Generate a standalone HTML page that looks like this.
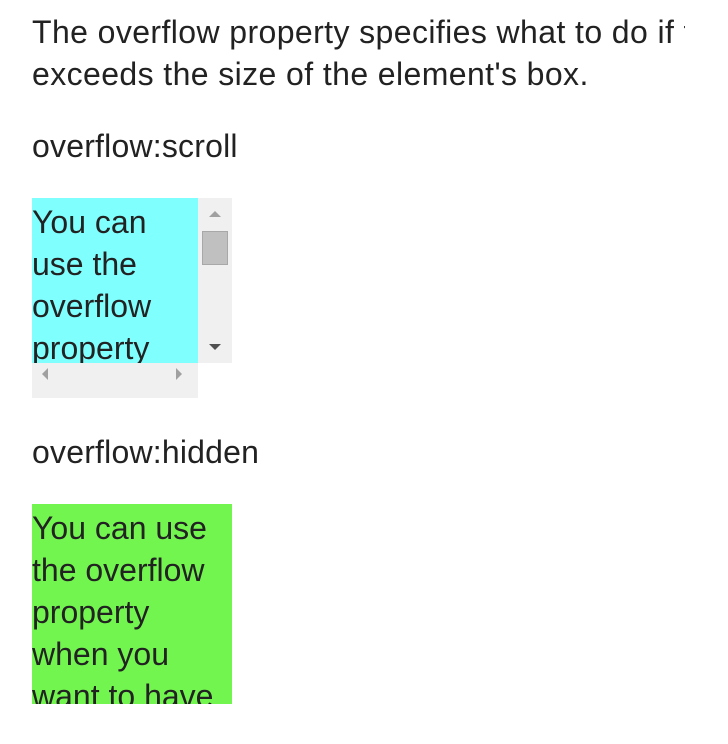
<!DOCTYPE html>
<html><head><style>
html,body{margin:0;padding:0;background:#fff;width:728px;height:744px;overflow:hidden;}
body{font-family:"Liberation Sans",sans-serif;font-size:32px;color:#222;position:relative;}
.t{position:absolute;left:32px;white-space:nowrap;line-height:42px;}
.box{position:absolute;left:32px;width:200px;height:200px;overflow:hidden;}
.in{line-height:42px;padding-top:3px;}
</style></head><body>
<div style="position:absolute;left:0;top:0;width:685px;height:110px;overflow:hidden">
<div class="t" style="top:11px;letter-spacing:0.4px">The overflow property specifies what to do if the content<br>exceeds the size of the element's box.</div>
</div>
<div class="t" style="top:125px;letter-spacing:0.2px">overflow:scroll</div>
<div class="box" style="top:198px;background:#f0f0f0">
  <div style="position:absolute;left:0;top:0;width:166px;height:165px;background:#80ffff;overflow:hidden"><div class="in" style="width:166px">You can<br>use the<br>overflow<br>property<br>when you</div></div>
  <div style="position:absolute;left:166px;top:165px;width:34px;height:35px;background:#fff"></div>
  <div style="position:absolute;left:170px;top:33px;width:26px;height:34px;background:#c0c0c0;border:1px solid #a8a8a8;box-sizing:border-box"></div>
  <svg style="position:absolute;left:0;top:0" width="200" height="200">
    <polygon points="177,19 183,13 189,19" fill="#a0a0a0"/>
    <polygon points="177,146 183,152 189,146" fill="#505050"/>
    <polygon points="16,182 10,176 16,170" fill="#a0a0a0"/>
    <polygon points="144,170 150,176 144,182" fill="#a0a0a0"/>
  </svg>
</div>
<div class="t" style="top:431px;letter-spacing:0.2px">overflow:hidden</div>
<div class="box" style="top:504px;background:#73f550"><div class="in">You can use<br>the overflow<br>property<br>when you<br>want to have</div></div>
</body></html>
